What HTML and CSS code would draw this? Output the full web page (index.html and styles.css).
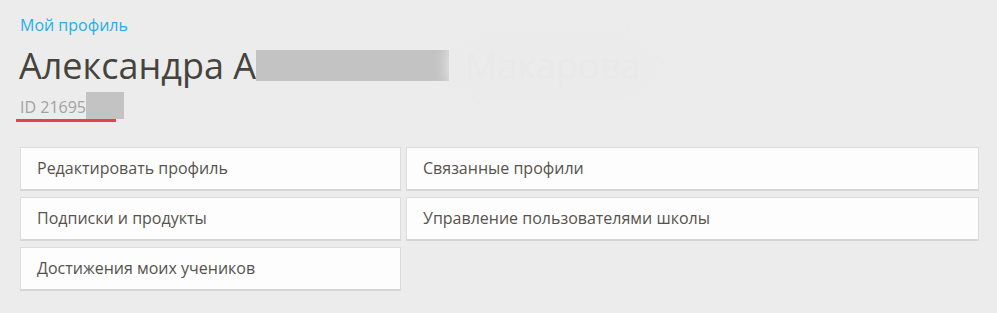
FILE: index.html
```html
<!DOCTYPE html>
<html lang="ru">

<head>
    <meta charset="UTF-8">
    <meta name="viewport" content="width=device-width, initial-scale=1.0">
    <title>Мой профиль</title>
    <link rel="stylesheet" href="styles.css">
</head>

<body>
    <div class="page">
        <!-- шапка профиля -->
        <a class="crumb" href="#">Мой профиль</a>
        <h1 class="name">Александра А<span class="hidden hidden-name"></span><span class="ghost">Макарова</span></h1>
        <div class="uid">ID 21695<span class="hidden hidden-id"></span></div>

        <!-- меню профиля -->
        <div class="menu">
            <a class="item" href="#">Редактировать профиль</a>
            <a class="item" href="#">Связанные профили</a>
            <a class="item" href="#">Подписки и продукты</a>
            <a class="item" href="#">Управление пользователями школы</a>
            <a class="item" href="#">Достижения моих учеников</a>
        </div>
    </div>
</body>

</html>
```

FILE: styles.css
```css
html,
body {
    margin: 0;
    padding: 0;
    background-color: #ececec;
}

body {
    font-family: "Open Sans", "Liberation Sans", sans-serif;
    color: #4d4a45;
}

.page {
    padding: 13px 18px 0 20px;
}

.crumb {
    display: block;
    font-size: 16px;
    line-height: 24px;
    color: #2aaee6;
    text-decoration: none;
}

.name {
    margin: 5px 0 0 -1px;
    font-size: 36px;
    font-weight: 400;
    line-height: 48px;
    color: #46433d;
    white-space: nowrap;
}

.hidden {
    display: inline-block;
    background-color: #c3c3c3;
}

.hidden-name {
    width: 193px;
    height: 31px;
    vertical-align: -2px;
}

.ghost {
    margin-left: 6px;
    padding: 0 10px;
    color: #e9e9e9;
    background-color: #ebebeb;
    border-radius: 20px;
    box-shadow: 0 0 14px 8px #ebebeb;
}

.uid {
    display: inline-block;
    margin: 2px 0 0 -4px;
    padding: 0 0 0 4px;
    font-size: 16px;
    line-height: 24px;
    color: #a2a2a2;
    border-bottom: 3px solid #e5434b;
}

.hidden-id {
    width: 38px;
    height: 27px;
    vertical-align: -6px;
    margin-right: -8px;
}

.menu {
    display: grid;
    grid-template-columns: 381px 573px;
    column-gap: 5px;
    row-gap: 6px;
    margin-top: 25px;
}

.item {
    display: block;
    height: 41px;
    padding-left: 16px;
    line-height: 41px;
    font-size: 16px;
    color: #57534c;
    text-decoration: none;
    background-color: #fdfdfd;
    border: 1px solid #dcdcdc;
    border-bottom: 2px solid #d6d6d6;
}

.item:hover {
    background-color: #f5f5f5;
}
```
